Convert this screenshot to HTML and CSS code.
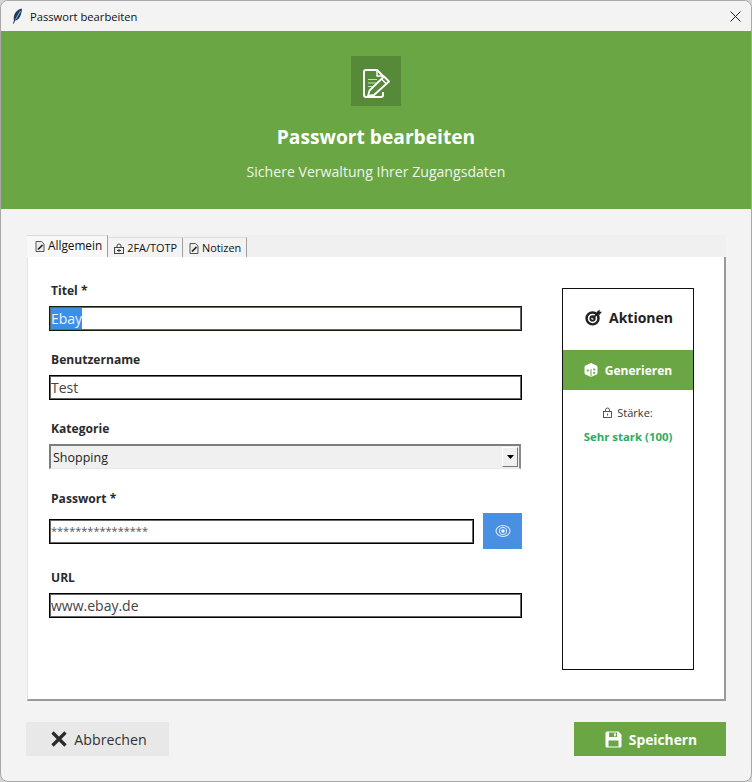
FILE: index.html
```html
<!DOCTYPE html>
<html lang="de">
<head>
<meta charset="utf-8">
<title>Passwort bearbeiten</title>
<link rel="stylesheet" href="styles.css">
</head>
<body>
<div class="window">
  <div class="titlebar">
    <svg class="feather" viewBox="0 0 12 16"><path d="M10 .5C7 .8 3 3.500 2 8c-.4 1.800-.3 3 0 4l-1 3.500.9.2 1-3c3-.3 5-3 6-6.200.6-2 1.100-4.500 1.100-6.500z" fill="#1f3a5c"/><path d="M8.500 3 3.500 11.500" stroke="#a9c8ec" stroke-width=".9"/></svg>
    <span class="titletext">Passwort bearbeiten</span>
    <svg class="close" viewBox="0 0 11 11"><path d="M.5.500l10 10M10.500.500l-10 10" stroke="#222" stroke-width="1" fill="none"/></svg>
  </div>
  <header class="hero">
    <div class="hero-icon">
      <svg viewBox="0 0 30 34" width="30" height="34" fill="none" stroke="#fff">
        <path d="M22 14v-2l-6-6H5a2 2 0 0 0-2 2v23a2 2 0 0 0 2 2h15a2 2 0 0 0 2-2v-3" stroke-width="2" stroke-linejoin="round"/>
        <path d="M16 6v6h6" stroke-width="1.400"/>
        <path d="M7 15.500h9M7 19h8M7 22.500h6" stroke-width="1.200" opacity=".7"/>
        <path d="M7 32l1.500-5.500L23 12.500l5 5L13 31z" fill="#568a38" stroke-width="1.800" stroke-linejoin="round"/>
        <path d="M20.500 15l5 5" stroke-width="1.400"/>
      </svg>
    </div>
    <h1 class="hero-title">Passwort bearbeiten</h1>
    <p class="hero-sub">Sichere Verwaltung Ihrer Zugangsdaten</p>
  </header>
  <main class="content">
    <div class="tabs">
      <div class="tab tab-active"><svg class="tab-icon" viewBox="0 0 10 11"><path d="M1 .5h5.500L9 3v7.500H1z" fill="#eee" stroke="#555"/><path d="M3 8.500l4.500-4.500" stroke="#222" stroke-width="1.700"/></svg>Allgemein</div>
      <div class="tab"><svg class="tab-icon" viewBox="0 0 10 11"><path d="M3 4.500V3a2 2 0 0 1 4 0v1.500" fill="none" stroke="#444"/><rect x=".5" y="4.500" width="9" height="6" fill="#eee" stroke="#444"/><path d="M5 6v3M3 7.500h4" stroke="#333"/></svg>2FA/TOTP</div>
      <div class="tab"><svg class="tab-icon" viewBox="0 0 10 11"><path d="M1 .5h5.500L9 3v7.500H1z" fill="#eee" stroke="#555"/><path d="M3 8.500l4.500-4.500" stroke="#222" stroke-width="1.700"/></svg>Notizen</div>
    </div>
    <div class="panel">
      <form class="form">
        <div class="field">
          <label class="label">Titel *</label>
          <div class="input input-focus"><span class="selected">Ebay</span></div>
        </div>
        <div class="field">
          <label class="label">Benutzername</label>
          <div class="input">Test</div>
        </div>
        <div class="field">
          <label class="label">Kategorie</label>
          <div class="select"><span>Shopping</span><span class="select-btn"><svg viewBox="0 0 7 4" width="7" height="4"><path d="M0 0h7L3.500 4z" fill="#000"/></svg></span></div>
        </div>
        <div class="field field-pw">
          <label class="label">Passwort *</label>
          <div class="pw-row">
            <div class="input input-pw">****************</div>
            <button type="button" class="eye-btn">
              <svg viewBox="0 0 16 14" width="16" height="14" fill="none" stroke="#fff"><ellipse cx="8" cy="7" rx="7" ry="5.500" stroke-width="1.100" opacity=".85"/><circle cx="8" cy="7" r="3.700" stroke-width="1" opacity=".85"/><circle cx="8" cy="7" r="1.700" fill="#fff" stroke="none"/></svg>
            </button>
          </div>
        </div>
        <div class="field">
          <label class="label">URL</label>
          <div class="input">www.ebay.de</div>
        </div>
      </form>
      <aside class="side">
        <div class="side-title">
          <svg viewBox="0 0 18 18" width="17" height="17" fill="none" stroke="#222"><circle cx="8" cy="10" r="6.300" stroke-width="2.600"/><circle cx="8" cy="10" r="2.300" stroke-width="2"/><path d="M8 10l7-7" stroke-width="2"/><path d="M12 3.500l3.500-3v2.500h2.500l-3 3.500z" fill="#222" stroke="none"/></svg>
          <span>Aktionen</span>
        </div>
        <button type="button" class="gen-btn">
          <svg viewBox="0 0 14 14" width="14" height="14"><path d="M7 .5l6 2.800v7.400l-6 2.800-6-2.800V3.300z" fill="#fff" stroke="#fff" stroke-linejoin="round"/><path d="M7 6v7.500" stroke="#6aa644"/><circle cx="3.800" cy="7.500" r="1.100" fill="#6aa644"/><circle cx="10.200" cy="6.500" r="1.100" fill="#6aa644"/><circle cx="10.200" cy="9.800" r="1.100" fill="#6aa644"/></svg>
          <span>Generieren</span>
        </button>
        <div class="strength-label">
          <svg viewBox="0 0 9 11" width="9" height="11" fill="none" stroke="#444"><path d="M2.500 4.500V3a2 2 0 0 1 4 0v1.500" stroke-width=".9"/><rect x=".5" y="4.500" width="8" height="6" stroke-width=".9"/><path d="M4.500 6.500v2" stroke-width=".9"/></svg>
          <span>Stärke:</span>
        </div>
        <div class="strength-value">Sehr stark (100)</div>
      </aside>
    </div>
    <div class="actions">
      <button type="button" class="btn btn-cancel">
        <svg viewBox="0 0 16 16" width="16" height="16"><path d="M1.500 1.500l13 13M14.500 1.500l-13 13" stroke="#2b2b2b" stroke-width="3.200" fill="none"/></svg>
        <span>Abbrechen</span>
      </button>
      <button type="button" class="btn btn-save">
        <svg viewBox="0 0 17 17" width="17" height="17"><path d="M2 .5h11.500L16.500 3.500V15a1.500 1.500 0 0 1-1.500 1.500H2A1.500 1.500 0 0 1 .5 15V2A1.500 1.500 0 0 1 2 .5z" fill="#fff"/><rect x="4" y="1.500" width="8" height="4.500" fill="#6aa644"/><rect x="9" y="2.300" width="1.800" height="3" fill="#fff"/><rect x="3.500" y="9.500" width="10" height="6" fill="#6aa644"/></svg>
        <span>Speichern</span>
      </button>
    </div>
  </main>
</div>
</body>
</html>
```

FILE: styles.css
```css
* { box-sizing: border-box; }
html, body { margin: 0; padding: 0; }
body {
  width: 752px;
  height: 782px;
  background: #d4d4d4;
  font-family: "Open Sans", "Noto Sans", sans-serif;
  color: #222;
  overflow: hidden;
}
.window {
  width: 752px;
  height: 782px;
  display: flex;
  flex-direction: column;
  background: #f3f3f3;
  border: 1px solid #a8a8a8;
  border-radius: 8px;
  overflow: hidden;
}
.titlebar {
  height: 30px;
  flex: none;
  display: flex;
  align-items: center;
  padding: 0 10px 0 11px;
  background: #f3f3f3;
}
.feather { width: 12px; height: 16px; flex: none; }
.titletext { margin-left: 6px; font-size: 11.200px; color: #111; flex: 1; }
.close { width: 11px; height: 11px; flex: none; }
.hero {
  height: 178px;
  flex: none;
  background: #6aa644;
  display: flex;
  flex-direction: column;
  align-items: center;
  padding-top: 25px;
  color: #fff;
}
.hero-icon {
  width: 50px;
  height: 50px;
  background: #568a38;
  display: flex;
  align-items: center;
  justify-content: center;
}
.hero-title {
  margin: 17px 0 0;
  font-size: 19.200px;
  line-height: 28px;
  font-weight: 700;
}
.hero-sub {
  margin: 11px 0 0;
  font-size: 14.100px;
  line-height: 20px;
  color: #f0f5ec;
}
.content {
  flex: 1;
  display: flex;
  flex-direction: column;
  padding: 26px 25px 0;
}
.tabs {
  height: 22px;
  flex: none;
  display: flex;
  align-items: flex-end;
  margin-left: 1px;
  background: #f0f0f0;
}
.tab {
  height: 20px;
  display: flex;
  align-items: center;
  gap: 3px;
  padding: 0 5px 1px 5px;
  font-size: 10.900px;
  color: #111;
  background: #f3f3f3;
  border-right: 1px solid #a0a0a0;
  border-top: 1px solid #dcdcdc;
  margin-right: 1px;
}
.tab-active {
  height: 22px;
  padding: 0 5px 3px 8px;
  background: #f8f8f8;
  font-size: 11.800px;
}
.tab-icon { width: 10px; height: 11px; flex: none; margin-top: 3px; }
.panel {
  width: 699px;
  height: 444px;
  flex: none;
  margin-left: 1px;
  display: flex;
  align-items: flex-start;
  padding: 23px 31px 0 21px;
  background: #fff;
  border-right: 2px solid #9a9a9a;
  border-bottom: 2px solid #9a9a9a;
  border-left: 1px solid #e4e4e4;
}
.form { width: 473px; flex: none; display: flex; flex-direction: column; gap: 18px; }
.field { display: flex; flex-direction: column; gap: 6px; }
.field-pw { gap: 5px; margin-top: 1px; }
.label {
  height: 20px;
  line-height: 22px;
  padding-left: 2px;
  font-size: 12.100px;
  font-weight: 700;
  color: #2b2b2b;
}
.input {
  width: 473px;
  height: 25px;
  border: 1px solid #000;
  box-shadow: inset 0 0 0 1px #666;
  background: #fff;
  font-size: 14px;
  line-height: 23px;
  padding-left: 1px;
  color: #444;
  white-space: nowrap;
}
.input-focus { border-color: #12220a; }
.selected {
  display: inline-block;
  height: 21px;
  line-height: 21px;
  margin-top: 1px;
  background: #3d8ee6;
  color: #e9f3ff;
}
.select {
  width: 472px;
  height: 25px;
  display: flex;
  align-items: center;
  justify-content: space-between;
  padding: 0 1px 0 2px;
  background: #f0f0f0;
  border-top: 2px solid #7d7d7d;
  border-left: 2px solid #7d7d7d;
  border-right: 2px solid #8a8a8a;
  border-bottom: 1px solid #e8e8e8;
  font-size: 12.500px;
  color: #222;
}
.select-btn {
  width: 16px;
  height: 20px;
  display: flex;
  align-items: center;
  justify-content: center;
  background: #f0f0f0;
  border-right: 1px solid #777;
  border-bottom: 1px solid #777;
  border-left: 1px solid #fff;
  border-top: 1px solid #fff;
}
.pw-row { display: flex; align-items: center; justify-content: space-between; width: 473px; }
.input-pw { width: 425px; height: 25px; font-size: 11px; line-height: 21px; color: #555; }
.eye-btn {
  width: 39px;
  height: 36px;
  border: 0;
  padding: 0;
  background: #4a90e2;
  display: flex;
  align-items: center;
  justify-content: center;
}
.side {
  width: 132px;
  height: 382px;
  flex: none;
  margin: 8px 0 0 40px;
  border: 1px solid #111;
  display: flex;
  flex-direction: column;
  align-items: center;
}
.side-title {
  height: 61px;
  width: 100%;
  display: flex;
  align-items: center;
  justify-content: center;
  gap: 7px;
  padding: 0 0 4px 2px;
  font-size: 14px;
  font-weight: 700;
  color: #222;
}
.gen-btn {
  width: 100%;
  height: 40px;
  border: 0;
  padding: 0;
  background: #6aa644;
  color: #fff;
  display: flex;
  align-items: center;
  justify-content: center;
  gap: 7px;
  font-family: inherit;
  font-size: 12px;
  font-weight: 700;
}
.strength-label {
  margin-top: 12px;
  height: 20px;
  display: flex;
  align-items: center;
  gap: 5px;
  font-size: 11px;
  color: #333;
}
.strength-value {
  margin-top: 5px;
  height: 20px;
  line-height: 20px;
  font-size: 11.400px;
  font-weight: 700;
  color: #27ae60;
}
.actions {
  display: flex;
  justify-content: space-between;
  margin-top: 21px;
}
.btn {
  height: 34px;
  border: 0;
  padding: 0;
  display: flex;
  align-items: center;
  justify-content: center;
  font-family: inherit;
}
.btn-cancel { width: 143px; gap: 7px; padding-left: 3px; background: #e8e8e8; color: #333; font-size: 14.200px; }
.btn-save { width: 152px; gap: 7px; padding-left: 2px; background: #6aa644; color: #fff; font-weight: 700; font-size: 13.800px; }
```
